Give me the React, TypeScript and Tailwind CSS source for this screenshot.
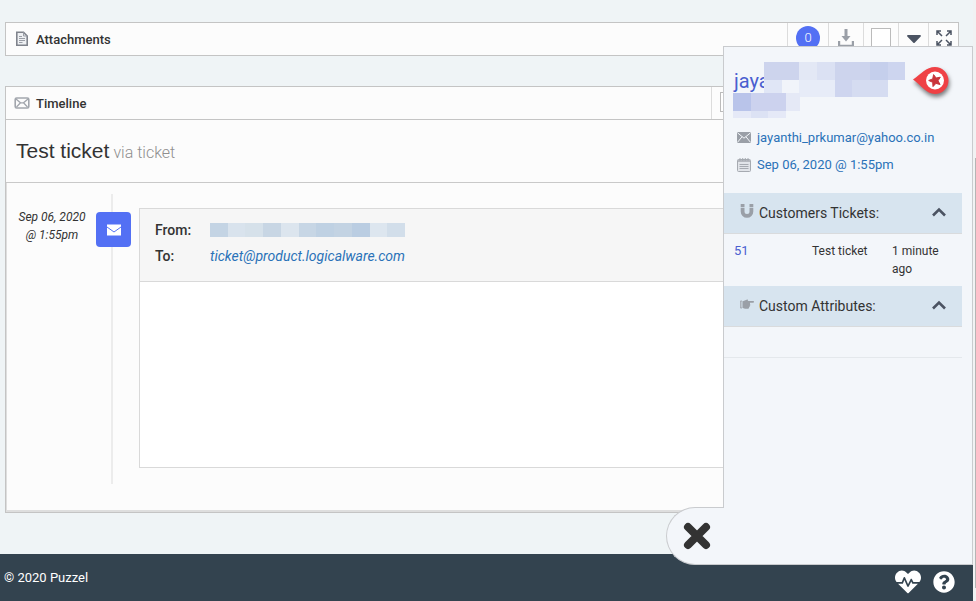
import type { ReactNode } from 'react';
import { FaHeartbeat, FaQuestionCircle, FaCaretDown } from 'react-icons/fa';

// Pixelated mask over the customer name: x, y, width, height, fill
const NAME_BLOCKS: [number, number, number, number, string][] = [
    [31, 0, 35, 18, '#cdd4ed'],
    [66, 0, 18, 18, '#e3e8f5'],
    [84, 0, 18, 18, '#dbe1f3'],
    [102, 0, 35, 18, '#cdd4ed'],
    [137, 0, 18, 18, '#c5cfec'],
    [155, 0, 17, 18, '#cdd5ef'],
    [31, 18, 18, 13, '#e0e6f6'],
    [49, 18, 17, 13, '#f1f4fa'],
    [66, 18, 36, 17, '#e7ecf8'],
    [102, 18, 17, 17, '#ced5ef'],
    [119, 18, 36, 17, '#d5dcf1'],
    [0, 31, 18, 18, '#b9c4ea'],
    [18, 31, 35, 18, '#ccd2ee'],
    [53, 31, 14, 18, '#e5e9f6'],
    [0, 49, 18, 7, '#e5e9f7'],
    [18, 49, 17, 7, '#dce2f4'],
    [35, 49, 18, 7, '#e5e9f7'],
];

const FROM_BLOCKS = [
    'bg-[#c4d4e4]', 'bg-[#d9e3ed]', 'bg-[#d6e1ea]', 'bg-[#c8d6e4]', 'bg-[#dce5ee]', 'bg-[#c7d6e5]',
    'bg-[#bfd1e3]', 'bg-[#c3d3e3]', 'bg-[#bacde2]', 'bg-[#dde6ef]', 'bg-[#d2deea]',
];

function DocumentIcon() {
    return (
        <svg className="h-4 w-3.5" viewBox="0 0 14 16" fill="#eef0f3" stroke="#7f838c">
            <path d="M1.8 1.300h6.700l3.700 3.700v9.200H1.800z" strokeWidth="1.600" />
            <path d="M8.500 1.300v3.700h3.700M4 5.500h3M4 7.500h6M4 9.500h6M4 11.500h3.500" fill="none" stroke="#9a9ea6" />
        </svg>
    );
}

function EnvelopeIcon() {
    return (
        <svg className="h-3 w-4" viewBox="0 0 16 12" fill="none" stroke="#a2a6ad" strokeWidth="1.300">
            <rect x="1.200" y="1" width="13.600" height="10" rx="1.500" strokeWidth="1.600" />
            <path d="M2 2l4.500 3.800h3L14 2M2.500 10l4-4.200M13.500 10l-4-4.200" />
        </svg>
    );
}

function SolidEnvelopeIcon() {
    return (
        <svg className="h-[11px] w-3.5" viewBox="0 0 14 11">
            <rect width="14" height="11" rx="1" fill="#9a9fa7" />
            <path d="M.5.8L7 6.200 13.500.8M.5 10.300l4.600-5.600M13.500 10.300L8.900 4.700" fill="none" stroke="#f3f6fa" />
        </svg>
    );
}

function CalendarIcon() {
    return (
        <svg className="h-3.5 w-3.5" viewBox="0 0 14 14" fill="none" stroke="#a6aab1">
            <rect x=".5" y="1.500" width="13" height="12" rx="1" fill="#e1e4e9" />
            <path d="M1 3h12" strokeWidth="1.500" />
            <path d="M3 0v3M5.700 0v3M8.300 0v3M11 0v3M2.500 6.500h9M2.500 8.500h9M2.500 10.500h9" />
        </svg>
    );
}

function MagnetIcon() {
    return (
        <svg className="h-3.5 w-3.5" viewBox="0 0 14 14" fill="none" stroke="#9a9fa7" strokeWidth="3.800">
            <path d="M2.600 3.800V7.500a4.400 4.400 0 0 0 8.800 0V3.800" />
            <path d="M2.600 0v2.900M11.400 0v2.900" />
        </svg>
    );
}

function HandIcon() {
    return (
        <svg className="h-[11px] w-3.5" viewBox="0 0 14 11" fill="#9a9fa7">
            <path d="M.4 2h1.600v7H.4z" fill="none" stroke="#9a9fa7" strokeWidth=".8" />
            <path d="M2.800 2.300L6 1c.8-.7 2.100-.7 2.200.2L7.600 2h5.800c.8 0 .8 1.700 0 1.700H10v1.500c.5.500.4 1.200-.3 1.600.3.600 0 1.300-.6 1.500.1.900-.4 1.400-1.200 1.400H5L2.800 9z" />
        </svg>
    );
}

function DownloadIcon() {
    return (
        <svg className="h-[18px] w-4" viewBox="0 0 16 18" fill="none" stroke="#9a9fa7" strokeWidth="2.200">
            <path d="M1.100 12v4.800h13.800V12" />
            <path d="M8 0v9" strokeWidth="3" />
            <path d="M3.500 7h9L8 12.500z" fill="#9a9fa7" stroke="none" />
        </svg>
    );
}

function ExpandIcon() {
    return (
        <svg className="h-4 w-4" viewBox="0 0 16 16" fill="none" stroke="#4b5362" strokeWidth="1.500">
            <path d="M1 5V1h4M11 1h4v4M15 11v4h-4M5 15H1v-4M1.500 1.500L6 6M14.500 1.500L10 6M14.500 14.500L10 10M1.500 14.500L6 10" />
        </svg>
    );
}

function ChevronIcon() {
    return (
        <svg className="h-3 w-3.5" viewBox="0 0 14 12" fill="none" stroke="#4b5362" strokeWidth="2.600">
            <path d="M1 8.500l6-6 6 6" />
        </svg>
    );
}

function CrossIcon() {
    return (
        <svg className="h-7 w-7" viewBox="0 0 28 28" fill="none" stroke="#333" strokeWidth="8" strokeLinecap="round">
            <path d="M5 5l18 18M23 5L5 23" />
        </svg>
    );
}

function StarPin() {
    return (
        <svg className="absolute top-[18px] right-5 h-10 w-10 drop-shadow-[1px_3px_2px_rgba(0,0,0,0.5)]" viewBox="0 0 40 40">
            <path d="M1 14.500C9 9 14 2 23 2a13.500 13.500 0 0 1 0 27C14 29 9 20 1 14.500z" fill="#ef4145" />
            <circle cx="23" cy="15.500" r="9" fill="#fff" />
            <path d="M21.600 9.600l2.500 3.400 4.200-.8-2.300 3.600 2.100 3.700-4.200-1.100-2.900 3.200-.3-4.300-4-1.800 4-1.600z" fill="#c9353b" stroke="#c9353b" />
        </svg>
    );
}

function ToolCell({ className, children }: { className: string; children: ReactNode }) {
    return <div className={`flex items-center justify-center border-l border-[#dcdcdc] pb-0.5 ${className}`}>{children}</div>;
}

function SectionHeader({ icon, title }: { icon: ReactNode; title: string }) {
    return (
        <h3 className="mr-2.5 border-b border-[#d9dbdd] bg-[#d7e4ef]">
            <button type="button" className="flex h-10 w-full items-center px-4 text-left text-sm text-[#333]">
                <span className="mr-1 flex w-[15px] pb-1">{icon}</span>
                <span className="flex-1">{title}</span>
                <ChevronIcon />
            </button>
        </h3>
    );
}

function CustomerPanel() {
    return (
        <aside className="absolute top-[46px] right-0 h-[519px] w-[250px] border border-[#c9cbce] bg-[#f3f6fa]">
            <button
                type="button"
                aria-label="Close"
                className="absolute -bottom-px -left-[58px] flex h-[58px] w-[58px] items-center rounded-l-full border border-r-0 border-[#c9cbce] bg-[#f3f6fa] pl-4"
            >
                <CrossIcon />
            </button>

            <StarPin />
            <div className="relative h-[71px] pt-5 pl-2.5">
                <h2 className="text-xl leading-7 text-[#4a5fd0]">jaya</h2>
                <svg className="absolute top-[15px] left-[9px] h-14 w-[172px]" viewBox="0 0 172 56" shapeRendering="crispEdges">
                    {NAME_BLOCKS.map(([x, y, w, h, fill]) => (
                        <rect key={`${x}-${y}`} x={x} y={y} width={w} height={h} fill={fill} />
                    ))}
                </svg>
            </div>

            <ul className="pt-1.5 pb-[15px] pl-[13px] text-[13px] leading-[27px] text-[#2a72b8]">
                <li className="flex items-center gap-1.5">
                    <SolidEnvelopeIcon />
                    <a href="#">jayanthi_prkumar@yahoo.co.in</a>
                </li>
                <li className="flex items-center gap-1.5">
                    <CalendarIcon />
                    <span>Sep 06, 2020 @ 1:55pm</span>
                </li>
            </ul>

            <SectionHeader icon={<MagnetIcon />} title="Customers Tickets:" />
            <table className="w-[238px] table-fixed text-xs leading-[18px] text-[#333]">
                <tbody>
                    <tr className="align-top">
                        <td className="w-[88px] py-2 pl-2.5">
                            <a href="#" className="text-[13px] text-[#4a5fd0]">51</a>
                        </td>
                        <td className="w-20 py-2">Test ticket</td>
                        <td className="py-2 pr-2">1 minute ago</td>
                    </tr>
                </tbody>
            </table>
            <SectionHeader icon={<HandIcon />} title="Custom Attributes:" />
            <div className="mr-2.5 h-[31px] border-b border-[#e4e8ec]" />
        </aside>
    );
}

export default function App() {
    return (
        <div className="flex min-h-screen bg-[#f1f2f3] font-['Roboto',sans-serif] text-[#333]">
            <div className="relative flex flex-1 flex-col bg-[#eff4f6]">
                <main className="flex-1 pt-[22px] pr-3.5 pb-10 pl-[5px]">
                    <section className="mb-[30px] flex h-[34px] border border-[#c4c4c4] bg-[#fcfcfc]">
                        <span className="flex w-[30px] items-center pl-[9px]"><DocumentIcon /></span>
                        <h2 className="flex-1 self-center pt-0.5 text-[13px] font-medium">Attachments</h2>
                        <ToolCell className="w-[41px]">
                            <span className="flex h-6 w-6 items-center justify-center rounded-full bg-[#5370f4] text-[13px] font-light text-white">0</span>
                        </ToolCell>
                        <ToolCell className="w-[35px]"><button type="button" aria-label="Download"><DownloadIcon /></button></ToolCell>
                        <ToolCell className="w-[35px]">
                            <input type="checkbox" aria-label="Select all attachments" className="h-5 w-5 appearance-none border border-[#bbb] bg-white" />
                        </ToolCell>
                        <ToolCell className="w-[30px]"><button type="button" aria-label="More"><FaCaretDown className="h-6 w-6 text-[#4b5362]" /></button></ToolCell>
                        <ToolCell className="w-[30px]"><button type="button" aria-label="Expand"><ExpandIcon /></button></ToolCell>
                    </section>

                    <section className="border border-[#c4c4c4] bg-[#fcfcfc]">
                        <header className="flex h-[33px] border-b border-[#c4c4c4]">
                            <span className="flex w-[30px] items-center pl-2"><EnvelopeIcon /></span>
                            <h2 className="flex-1 self-center pt-0.5 text-[13px] font-medium">Timeline</h2>
                            <ToolCell className="w-[247px]">
                                <input type="checkbox" aria-label="Select timeline" className="mr-auto ml-2 h-5 w-5 appearance-none border border-[#bbb] bg-white" />
                            </ToolCell>
                        </header>
                        <h1 className="flex h-[63px] items-center gap-1 border-b border-[#c9c9c9] pl-2.5 font-['Liberation_Sans',sans-serif] text-[21px]">
                            Test ticket <small className="pt-1 font-['Roboto',sans-serif] text-base font-light text-[#8f8f8f]">via ticket</small>
                        </h1>

                        <div className="flex border-b-2 border-l border-[#dedede] pt-[11px] pr-2.5 pb-[26px] pl-[9px]">
                            <time className="w-[72px] pt-3.5 text-center text-xs leading-[18px] italic">
                                Sep 06, 2020 @ 1:55pm
                            </time>
                            <div className="mx-2 w-[35px] bg-[linear-gradient(#ececec,#ececec)] bg-[length:2px_100%] bg-[position:15px_0] bg-no-repeat pt-[18px]">
                                <span className="flex h-[35px] w-[35px] items-center justify-center rounded bg-[#5370f4]">
                                    <svg className="h-3 w-3.5" viewBox="0 0 14 12">
                                        <rect y=".5" width="14" height="11" fill="#fff" />
                                        <path d="M0 3l7 5 7-5" fill="none" stroke="#5370f4" />
                                    </svg>
                                </span>
                            </div>
                            <article className="mt-3.5 mb-4 flex-1 border border-[#d9d9d9] bg-white">
                                <dl className="grid grid-cols-[55px_1fr] border-b border-[#d9d9d9] bg-[#f6f6f6] pt-2 pb-3 pl-[15px] text-sm leading-[26px]">
                                    <dt className="font-medium">From:</dt>
                                    <dd className="flex w-[195px] items-center">
                                        {FROM_BLOCKS.map((color) => (
                                            <span key={color} className={`h-3.5 flex-1 ${color}`} />
                                        ))}
                                    </dd>
                                    <dt className="font-medium">To:</dt>
                                    <dd className="italic"><a href="#" className="text-[#2a72b8]">ticket@product.logicalware.com</a></dd>
                                </dl>
                                <div className="h-[185px]" />
                            </article>
                        </div>
                    </section>
                </main>

                <footer className="flex h-[47px] items-center justify-between bg-[#33434f] pr-[18px] pl-1 text-white">
                    <p className="text-[13px]">© 2020 Puzzel</p>
                    <div className="flex items-center gap-3 pt-2">
                        <button type="button" aria-label="Status"><FaHeartbeat className="h-[26px] w-[26px]" /></button>
                        <button type="button" aria-label="Help"><FaQuestionCircle className="h-[22px] w-[22px]" /></button>
                    </div>
                </footer>

                <CustomerPanel />
            </div>

            {/* Scroll gutter */}
            <div className="w-[3px] pt-[158px] pl-0.5">
                <div className="h-[430px] bg-[#b5b5b5]" />
            </div>
        </div>
    );
}
